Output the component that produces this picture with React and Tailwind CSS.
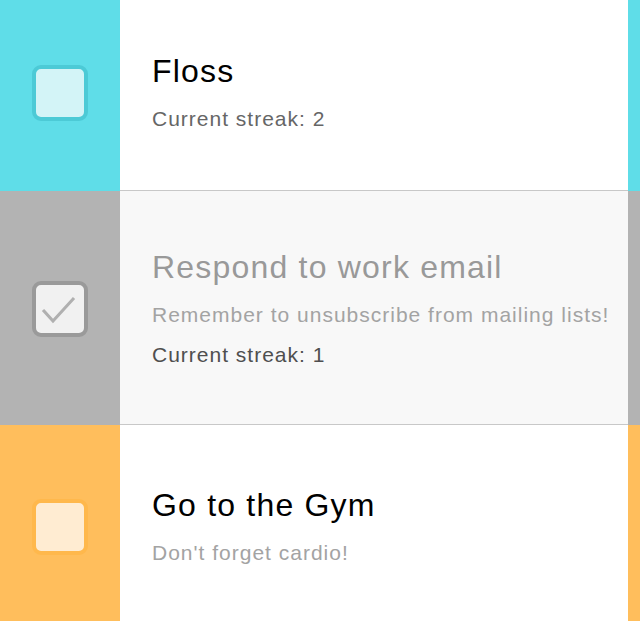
import { useState } from "react";

const habits = [
  {
    id: 1,
    title: "Floss",
    note: null,
    streak: 2,
    done: false,
    color: "bg-[#5fdde8]",
    box: "border-[#4ccad6] bg-[#d3f4f7]",
    pad: "pt-[53px] pb-[59px]",
  },
  {
    id: 2,
    title: "Respond to work email",
    note: "Remember to unsubscribe from mailing lists!",
    streak: 1,
    done: true,
    color: "bg-[#b3b3b3]",
    box: "border-[#9a9a9a] bg-[#f1f1f1]",
    pad: "pt-[58px] pb-[57px]",
  },
  {
    id: 3,
    title: "Go to the Gym",
    note: "Don't forget cardio!",
    streak: null,
    done: false,
    color: "bg-[#ffbe5c]",
    box: "border-[#ffb84c] bg-[#ffecd2]",
    pad: "pt-[62px] pb-[62px]",
  },
];

function Checkbox({ done, box }) {
  return (
    <div className={`w-[56px] h-[56px] rounded-[9px] border-[4px] flex items-center justify-center ${box}`}>
      {done && (
        <svg width="48" height="48" viewBox="0 0 48 48" fill="none">
          <path d="M8 26 L17 36 L37 14" stroke="#b0b0b0" strokeWidth="3" strokeLinecap="square" />
        </svg>
      )}
    </div>
  );
}

function HabitRow({ habit }) {
  return (
    <div className="flex">
      <div className={`w-[120px] shrink-0 flex items-center justify-center ${habit.color} ${habit.pad}`}>
        <Checkbox done={habit.done} box={habit.box} />
      </div>

      <div
        className={`flex-1 pl-[32px] border-b border-[#c8c8c8] ${habit.pad} ${
          habit.done ? "bg-[#f8f8f8]" : "bg-white"
        }`}
      >
        <h2
          className={`text-[32px] leading-[36px] tracking-[1.2px] ${
            habit.done ? "text-[#999999]" : "text-black"
          }`}
        >
          {habit.title}
        </h2>
        {habit.note && (
          <p className="mt-[18px] text-[21px] leading-[24px] tracking-[1px] text-[#a3a3a3]">{habit.note}</p>
        )}
        {habit.streak !== null && (
          <p
            className={`${habit.note ? "mt-[16px]" : "mt-[18px]"} text-[21px] leading-[24px] tracking-[1px] ${
              habit.done ? "text-[#4f4f4f]" : "text-[#666666]"
            }`}
          >
            Current streak: {habit.streak}
          </p>
        )}
      </div>

      <div className={`w-[12px] shrink-0 ${habit.color}`} />
    </div>
  );
}

export default function App() {
  const [items] = useState(habits);

  return (
    <div className="w-[640px] h-[621px] overflow-hidden bg-white font-['Liberation_Sans',Arial,sans-serif]">
      {items.map((h) => (
        <HabitRow key={h.id} habit={h} />
      ))}
    </div>
  );
}
